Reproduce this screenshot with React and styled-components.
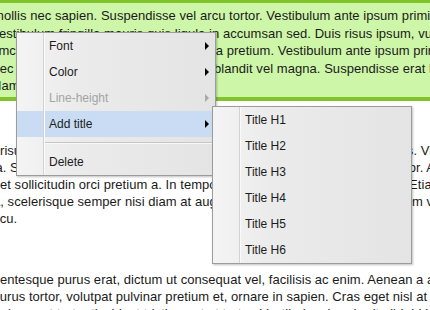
import React from 'react';
import styled, { createGlobalStyle } from 'styled-components';

const Global = createGlobalStyle`
  html, body { margin: 0; padding: 0; background: #ffffff; }
  body {
    font-family: "Liberation Sans", Arial, sans-serif;
    font-size: 13px;
    color: #1a1a1a;
  }
`;

const Page = styled.div`
  position: relative;
  width: 430px;
  height: 310px;
  overflow: hidden;
  background: #fff;
`;

const Note = styled.section`
  background: #cdf6a8;
  border-top: 3px solid #7fc52a;
  border-bottom: 4px solid #7fc52a;
  padding: 4px 0 1px;
  height: 89px;
`;

const Body = styled.div`
  padding-top: 41px;
`;

const Para = styled.p`
  margin: 0 0 ${p => p.$gap || 0}px;
`;

const Line = styled.span`
  display: block;
  white-space: nowrap;
  letter-spacing: 0.05px;
  line-height: ${p => p.$lh || 17}px;
  margin-left: ${p => p.$shift || 0}px;
`;

const Menu = styled.ul`
  position: absolute;
  left: ${p => p.$x}px;
  top: ${p => p.$y}px;
  width: 200px;
  box-sizing: border-box;
  margin: 0;
  padding: 0;
  list-style: none;
  border: 1px solid #9c9c9c;
  background: linear-gradient(to right, #f4f4f4 0%, #ebebeb 30%, #e4e4e4 100%);
  box-shadow: 1px 1px 2px rgba(0, 0, 0, 0.25);
  font-size: 12px;
  color: #1c1c1c;
  z-index: ${p => p.$z || 1};
`;

const Item = styled.li`
  display: flex;
  align-items: center;
  height: 26px;
  background: ${p => (p.$active ? '#c9dcf3' : 'transparent')};
  color: ${p => (p.$disabled ? '#a4a4a4' : '#1c1c1c')};
`;

const Gutter = styled.span`
  flex: none;
  width: 26px;
  align-self: stretch;
  border-right: 1px solid #d3d3d3;
  box-shadow: 1px 0 0 #fafafa;
`;

const Label = styled.span`
  flex: 1;
  padding-left: 5px;
`;

const Arrow = styled.span`
  flex: none;
  width: 0;
  height: 0;
  margin-right: 6px;
  border-top: 4px solid transparent;
  border-bottom: 4px solid transparent;
  border-left: 4px solid ${p => (p.$disabled ? '#a8a8a8' : '#000')};
`;

const Separator = styled.li`
  display: flex;
  height: 12px;
`;

const Rule = styled.span`
  flex: 1;
  align-self: center;
  margin-left: 1px;
  border-top: 1px solid #c6c6c6;
  border-bottom: 1px solid #f8f8f8;
`;

function MenuItem({ label, arrow, active, disabled }) {
  return (
    <Item $active={active} $disabled={disabled}>
      <Gutter />
      <Label>{label}</Label>
      {arrow && <Arrow $disabled={disabled} />}
    </Item>
  );
}

export default function App() {
  return (
    <Page>
      <Global />
      <Note>
        <Line $lh={17.5} $shift={-7}>mollis nec sapien. Suspendisse vel arcu tortor. Vestibulum ante ipsum primis in faucibus</Line>
        <Line $lh={17.5} $shift={-9}>Vestibulum fringilla mauris quis ligula in accumsan sed. Duis risus ipsum, vulputate</Line>
        <Line $lh={17.5} $shift={-22}>ullamcorper nisl, sit amet sollicitudin orci a pretium. Vestibulum ante ipsum primis in</Line>
        <Line $lh={17.5} $shift={-7.5}>nec tellus ac lacus tristique commodo blandit vel magna. Suspendisse erat lorem</Line>
        <Line $lh={17.5} $shift={-8}>Nam eget lectus quis nibh aliquet.</Line>
      </Note>
      <Body>
        <Para $gap={44}>
          <Line>risus dignissim lectus placerat nunc tellus egestas ligula vitae et mauris. Vivamus</Line>
          <Line $shift={-4.5}>a. Sed porttitor massa pharetra eu feugiat sodales mi luctus tempor tortor. Aliquam</Line>
          <Line>et sollicitudin orci pretium a. In tempor dignissim placerat sodales nisi. Etiam</Line>
          <Line $shift={-7}>a, scelerisque semper nisi diam at augue dignissim placerat tempor ipsum vel</Line>
          <Line $shift={-12}>arcu.</Line>
        </Para>
        <Para>
          <Line $shift={-22}>Pellentesque purus erat, dictum ut consequat vel, facilisis ac enim. Aenean a arcu</Line>
          <Line $shift={-7.5}>purus tortor, volutpat pulvinar pretium et, ornare in sapien. Cras eget nisl at lorem</Line>
          <Line $shift={-3}>a lacus at tortor tincidunt tristique et ut tortor. Vestibulum hendrerit nibh id blandit</Line>
        </Para>
      </Body>

      <Menu $x={16} $y={32} $z={2}>
        <MenuItem label="Font" arrow />
        <MenuItem label="Color" arrow />
        <MenuItem label="Line-height" arrow disabled />
        <MenuItem label="Add title" arrow active />
        <Separator>
          <Gutter />
          <Rule />
        </Separator>
        <MenuItem label="Delete" />
      </Menu>

      <Menu $x={212} $y={106} $z={3}>
        <MenuItem label="Title H1" />
        <MenuItem label="Title H2" />
        <MenuItem label="Title H3" />
        <MenuItem label="Title H4" />
        <MenuItem label="Title H5" />
        <MenuItem label="Title H6" />
      </Menu>
    </Page>
  );
}
